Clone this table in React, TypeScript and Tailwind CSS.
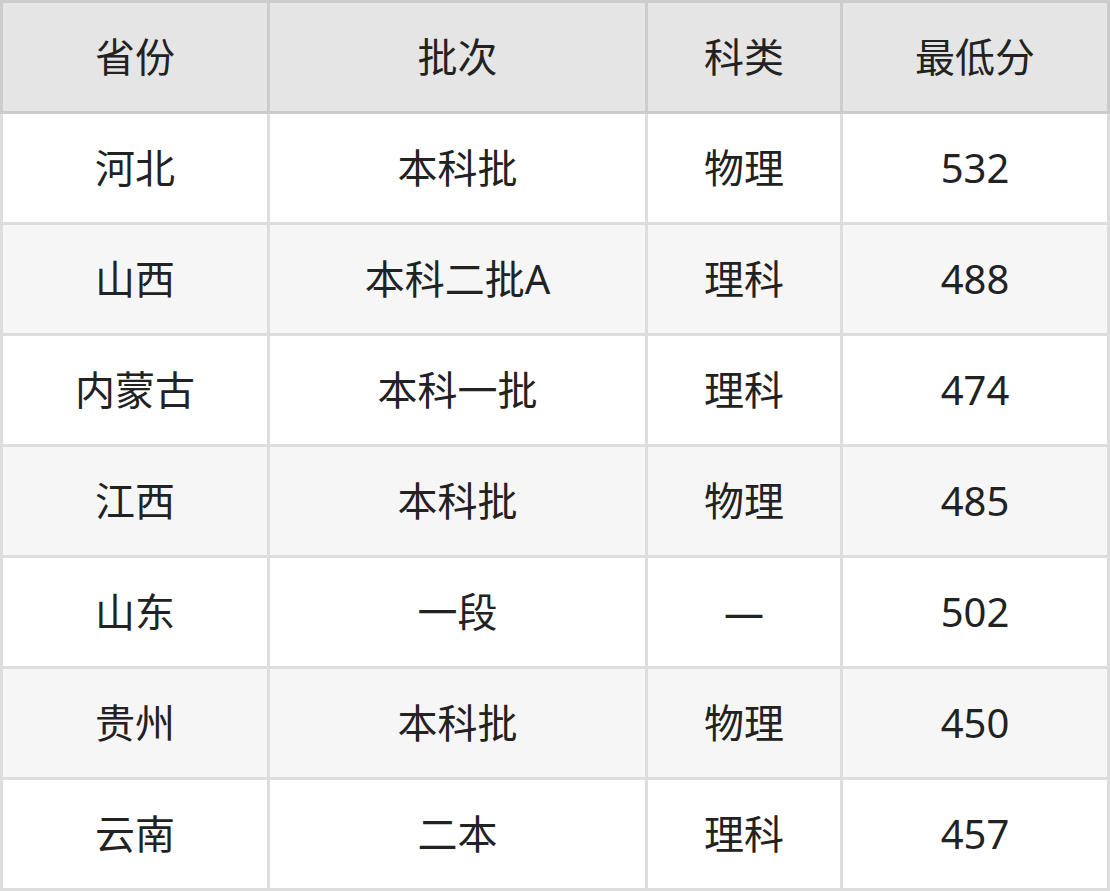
const header = ["省份", "批次", "科类", "最低分"]

const rows = [
    ["河北", "本科批", "物理", "532"],
    ["山西", "本科二批A", "理科", "488"],
    ["内蒙古", "本科一批", "理科", "474"],
    ["江西", "本科批", "物理", "485"],
    ["山东", "一段", "—", "502"],
    ["贵州", "本科批", "物理", "450"],
    ["云南", "二本", "理科", "457"],
]

export default function App() {
    return (
        <div className="w-[1110px] flex flex-col text-[40px] text-[#222] font-['Noto_Sans','Noto_Sans_CJK_SC',sans-serif]">
            <div className="bg-[#cccccc] p-[3px] grid grid-cols-[264px_375px_192px_264px] gap-[3px]">
                {header.map((h) => (
                    <div key={h} className="h-[108px] bg-[#e5e5e5] flex items-center justify-center">
                        {h}
                    </div>
                ))}
            </div>
            <div className="bg-[#dddddd] px-[3px] pb-[3px] grid grid-cols-[264px_375px_192px_264px] gap-[3px]">
                {rows.map((r, i) =>
                    r.map((c, j) => (
                        <div
                            key={`${i}-${j}`}
                            className={`h-[108px] flex items-center justify-center ${i % 2 === 1 ? "bg-[#f6f6f6]" : "bg-white"}`}
                        >
                            {c}
                        </div>
                    ))
                )}
            </div>
        </div>
    )
}
